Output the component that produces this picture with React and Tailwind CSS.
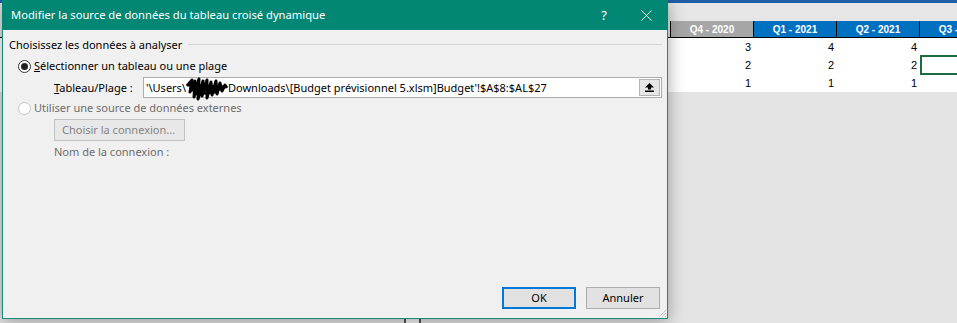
import React from "react";

const ui = "font-['Noto_Sans',sans-serif]";

function Radio({ checked, disabled }) {
  return (
    <span
      className={
        "flex h-[13px] w-[13px] items-center justify-center rounded-full border " +
        (disabled ? "border-[#c6c6c6] bg-white" : "border-[#333333] bg-white")
      }
    >
      {checked && <span className="h-[7px] w-[7px] rounded-full bg-[#222222]" />}
    </span>
  );
}

function Scribble() {
  return (
    <svg width="42" height="24" viewBox="0 0 42 24" className="-my-[6px] inline-block align-middle">
      <path
        d="M1 9 L6 3 L4 15 L9 4 L8 20 L13 2 L12 22 L17 4 L16 19 L21 3 L21 21 L25 5 L26 18 L30 4 L31 17 L34 6 L36 14 L39 8 L41 11"
        fill="none"
        stroke="#000"
        strokeWidth="3"
        strokeLinejoin="round"
      />
      <path d="M3 8 L38 10 M5 13 L36 12 M8 17 L30 15" stroke="#000" strokeWidth="3" fill="none" />
    </svg>
  );
}

function Sheet() {
  const headers = [
    { t: "Q4 - 2020", bg: "bg-[#a6a6a6]" },
    { t: "Q1 - 2021", bg: "bg-[#0070c0]" },
    { t: "Q2 - 2021", bg: "bg-[#0070c0]" },
    { t: "Q3 - 2021", bg: "bg-[#0070c0]" },
  ];
  const rows = [
    ["3", "4", "4", ""],
    ["2", "2", "2", ""],
    ["1", "1", "1", ""],
  ];
  return (
    <div className="flex h-[323px] w-[957px] flex-col bg-[#e4e4e4] font-['Liberation_Sans',sans-serif]">
      <div className="h-[3px] bg-[#1f5ea6]" />
      <div className="h-[18px] bg-[#e6e6e6]" />
      <div className="flex h-[17px] border-b border-black">
        <div className="w-[670px] shrink-0 bg-[#e6e6e6]" />
        {headers.map((h) => (
          <div
            key={h.t}
            className={
              "flex w-[83px] shrink-0 items-center justify-center border-l border-black text-[10px] font-bold text-white " +
              h.bg
            }
          >
            <span className="whitespace-nowrap">{h.t}</span>
          </div>
        ))}
      </div>
      {rows.map((r, i) => (
        <div key={i} className="flex h-[18px] bg-white">
          <div className="w-[671px] shrink-0" />
          {r.map((v, j) => (
            <div
              key={j}
              className="relative flex w-[83px] shrink-0 items-center justify-end pr-[3px] text-[11px] text-black"
            >
              {v}
              {i === 1 && j === 3 && (
                <div className="absolute -top-[1px] -bottom-[1px] left-0 right-0 border-2 border-[#1e6b41]" />
              )}
            </div>
          ))}
        </div>
      ))}
      <div className="flex-1" />
      <div className="flex h-[4px]">
        <div className="ml-[404px] w-[17px] border-x-2 border-[#555555] bg-[#f4f4f4]" />
      </div>
    </div>
  );
}

function Dialog() {
  return (
    <div
      className={
        "absolute left-[2px] top-0 flex h-[319px] w-[666px] flex-col border-x border-b border-[#1a8a7a] bg-[#f0f0f0] shadow-[0_2px_16px_rgba(0,0,0,0.35)] " +
        ui
      }
    >
      <div className="-mx-px flex h-[30px] shrink-0 items-center bg-[#018774] text-white">
        <span className="pl-[9px] text-[11.2px] leading-none">
          Modifier la source de données du tableau croisé dynamique
        </span>
        <span className="ml-auto mr-[34px] text-[13px] leading-none">?</span>
        <svg width="11" height="11" viewBox="0 0 11 11" className="mr-[16px]">
          <path d="M0.5 0.5 L10.5 10.5 M10.5 0.5 L0.5 10.5" stroke="#fff" strokeWidth="1" />
        </svg>
      </div>

      <div className="flex flex-1 flex-col text-[11px] leading-[16px] text-black">
        <div className="mt-[7px] flex h-[16px] items-center">
          <span className="pl-[6px] whitespace-nowrap">Choisissez les données à analyser</span>
          <div className="ml-[6px] mr-[5px] mb-[2px] flex-1 border-t border-[#d5d5d5]" />
        </div>

        <div className="mt-[5px] flex h-[16px] items-center pl-[15px]">
          <Radio checked />
          <span className="ml-[3px] whitespace-nowrap">
            <span className="underline">S</span>électionner un tableau ou une plage
          </span>
        </div>

        <div className="mt-[3px] flex h-[21px] items-center pl-[51px] pr-[5px]">
          <span className="w-[89px] shrink-0 whitespace-nowrap">
            <span className="underline">T</span>ableau/Plage :
          </span>
          <div className="flex h-[21px] flex-1 items-center border border-[#adadad] bg-white">
            <span className="flex-1 whitespace-nowrap pl-[2px]">
              '\Users\
              <Scribble />
              Downloads\[Budget prévisionnel 5.xlsm]Budget'!$A$8:$AL$27
            </span>
            <div className="mr-px flex h-[17px] w-[21px] items-center justify-center border border-[#b4b4b4] bg-[#e6e6e6]">
              <svg width="9" height="9" viewBox="0 0 9 9">
                <polygon points="4.5,0 9,4.5 6,4.5 6,6.5 3,6.5 3,4.5 0,4.5" fill="#000" />
                <rect x="0" y="7.5" width="9" height="1.5" fill="#000" />
              </svg>
            </div>
          </div>
        </div>

        <div className="mt-[2px] flex h-[16px] items-center pl-[15px]">
          <Radio disabled />
          <span className="ml-[3px] whitespace-nowrap text-[#6d6d6d]">
            Utiliser une source de données externes
          </span>
        </div>

        <div className="mt-[3px] pl-[51px]">
          <div className="flex h-[22px] w-[131px] items-center border border-[#c2c2c2] bg-[#e8e8e8] pl-[7px] text-[#838383]">
            Choisir la connexion...
          </div>
        </div>

        <div className="mt-[3px] h-[16px] pl-[51px] text-[#6d6d6d]">Nom de la connexion :</div>

        <div className="mt-auto flex justify-end gap-[10px] pb-[9px] pr-[7px]">
          <div className="flex h-[22px] w-[74px] items-center justify-center border-2 border-[#0078d7] bg-[#e1e1e1]">
            OK
          </div>
          <div className="flex h-[22px] w-[74px] items-center justify-center border border-[#adadad] bg-[#e1e1e1]">
            Annuler
          </div>
        </div>
      </div>

      <svg width="9" height="9" viewBox="0 0 9 9" className="absolute bottom-0 right-0">
        <path d="M8 1 L1 8 M8 4 L4 8 M8 7 L7 8" stroke="#a0a0a0" strokeWidth="1" strokeDasharray="1 1" />
      </svg>
    </div>
  );
}

export default function App() {
  return (
    <div className="relative h-[323px] w-[957px] overflow-hidden">
      <Sheet />
      <Dialog />
    </div>
  );
}
